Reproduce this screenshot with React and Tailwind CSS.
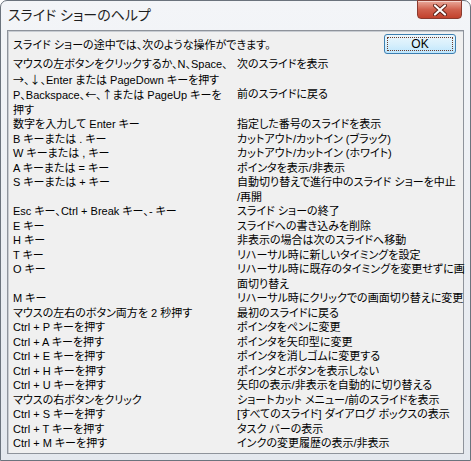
import React from "react";

// key / action pairs, explicit line breaks to match the dialog's wrapping
const ROWS = [
  {
    keys: ["マウスの左ボタンをクリックするか、N、Space、", "→、↓、Enter または PageDown キーを押す"],
    action: ["次のスライドを表示"],
  },
  {
    keys: ["P、Backspace、←、↑または PageUp キーを", "押す"],
    action: ["前のスライドに戻る"],
  },
  { keys: ["数字を入力して Enter キー"], action: ["指定した番号のスライドを表示"] },
  { keys: ["B キーまたは . キー"], action: ["カットアウト/カットイン (ブラック)"] },
  { keys: ["W キーまたは , キー"], action: ["カットアウト/カットイン (ホワイト)"] },
  { keys: ["A キーまたは = キー"], action: ["ポインタを表示/非表示"] },
  {
    keys: ["S キーまたは + キー"],
    action: ["自動切り替えで進行中のスライド ショーを中止", "/再開"],
  },
  { keys: ["Esc キー、Ctrl + Break キー、- キー"], action: ["スライド ショーの終了"] },
  { keys: ["E キー"], action: ["スライドへの書き込みを削除"] },
  { keys: ["H キー"], action: ["非表示の場合は次のスライドへ移動"] },
  { keys: ["T キー"], action: ["リハーサル時に新しいタイミングを設定"] },
  {
    keys: ["O キー"],
    action: ["リハーサル時に既存のタイミングを変更せずに画", "面切り替え"],
  },
  { keys: ["M キー"], action: ["リハーサル時にクリックでの画面切り替えに変更"] },
  { keys: ["マウスの左右のボタン両方を 2 秒押す"], action: ["最初のスライドに戻る"] },
  { keys: ["Ctrl + P キーを押す"], action: ["ポインタをペンに変更"] },
  { keys: ["Ctrl + A キーを押す"], action: ["ポインタを矢印型に変更"] },
  { keys: ["Ctrl + E キーを押す"], action: ["ポインタを消しゴムに変更する"] },
  { keys: ["Ctrl + H キーを押す"], action: ["ポインタとボタンを表示しない"] },
  { keys: ["Ctrl + U キーを押す"], action: ["矢印の表示/非表示を自動的に切り替える"] },
  { keys: ["マウスの右ボタンをクリック"], action: ["ショートカット メニュー/前のスライドを表示"] },
  { keys: ["Ctrl + S キーを押す"], action: ["[すべてのスライド] ダイアログ ボックスの表示"] },
  { keys: ["Ctrl + T キーを押す"], action: ["タスク バーの表示"] },
  { keys: ["Ctrl + M キーを押す"], action: ["インクの変更履歴の表示/非表示"] },
];

// arrows come out tiny in Liberation Sans, draw them with the CJK face
function Line({ text }) {
  const parts = text.split(/([←↑→↓])/);
  return (
    <div className="whitespace-nowrap">
      {parts.map((p, i) =>
        /[←↑→↓]/.test(p) ? (
          <span key={i} className="[font-family:'Noto_Sans_CJK_JP',sans-serif]">
            {p}
          </span>
        ) : (
          <React.Fragment key={i}>{p}</React.Fragment>
        )
      )}
    </div>
  );
}

function CloseButton() {
  return (
    <button className="mt-[-1px] mr-[8px] w-[45px] h-[19px] flex items-center justify-center rounded-b-[4px] border border-[#8a3a2e] bg-gradient-to-b from-[#e9a99b] via-[#d0614e] to-[#c2412c] shadow-[inset_0_1px_0_rgba(255,255,255,0.5)]">
      <svg width="14" height="12" viewBox="0 0 14 12">
        <path
          d="M2 1.5 L12 10.5 M12 1.5 L2 10.5"
          stroke="#5a1f16"
          strokeWidth="4"
          strokeLinecap="round"
        />
        <path
          d="M2 1.5 L12 10.5 M12 1.5 L2 10.5"
          stroke="#ffffff"
          strokeWidth="2.2"
          strokeLinecap="round"
        />
      </svg>
    </button>
  );
}

export default function App() {
  return (
    <div className="w-[471px] h-[461px] flex flex-col rounded-t-[7px] border border-[#6b737d] bg-gradient-to-b from-[#f3f5f8] to-[#e4e8ee] text-black [font-family:'Liberation_Sans','Noto_Sans_CJK_JP',sans-serif] [font-feature-settings:'palt']">
      {/* Title bar */}
      <div className="h-[29px] flex items-start justify-between">
        <div className="pl-[7px] pt-[4px] text-[14px] leading-[20px] text-[#1e1e1e]">
          スライド ショーのヘルプ
        </div>
        <CloseButton />
      </div>

      {/* Client area */}
      <div className="mx-[6px] mb-[6px] flex-1 border border-[#8e939b] bg-[#f0f0f0] shadow-[inset_1px_1px_0_#c8ccd2] text-[11px] leading-[14.5px]">
        <div className="flex items-start justify-between pl-[5px] pr-[7px] pt-[3px]">
          <div className="pt-[4px]">スライド ショーの途中では、次のような操作ができます。</div>
          <button className="w-[72px] h-[20px] rounded-[3px] border border-[#3c7fb1] bg-gradient-to-b from-[#eaf6fd] via-[#d9f0fc] to-[#bee6fd] p-[2px]">
            <div className="h-full w-full flex items-center justify-center border border-dotted border-[#6b3a2a] text-[12px] leading-none">
              OK
            </div>
          </button>
        </div>

        <div className="pl-[5px] pt-[3px] flex flex-col">
          {ROWS.map((row, i) => (
            <div key={i} className="flex">
              <div className="w-[224px] shrink-0">
                {row.keys.map((line, j) => (
                  <Line key={j} text={line} />
                ))}
              </div>
              <div className="flex-1">
                {row.action.map((line, j) => (
                  <Line key={j} text={line} />
                ))}
              </div>
            </div>
          ))}
        </div>
      </div>
    </div>
  );
}
